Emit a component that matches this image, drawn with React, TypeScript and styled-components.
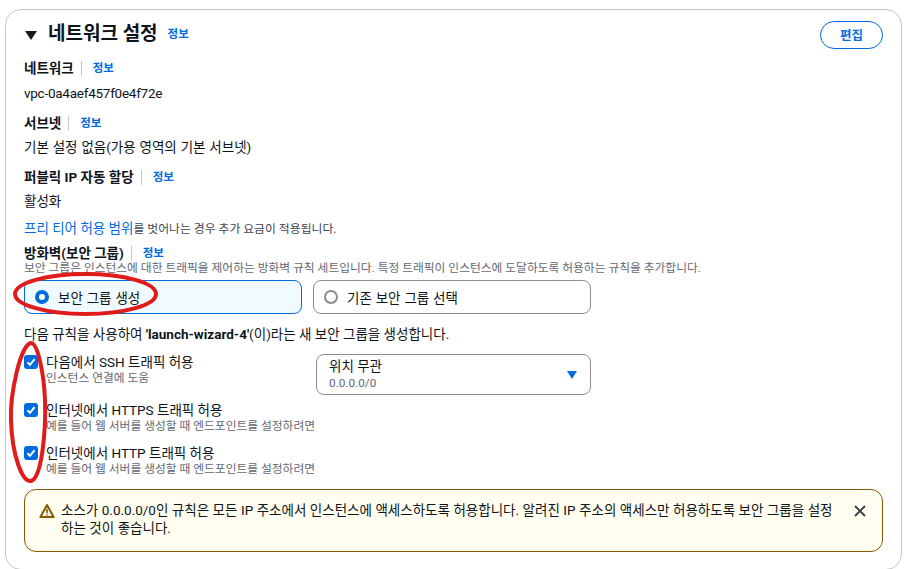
import React from 'react'
import styled, { createGlobalStyle } from 'styled-components'

const GlobalStyle = createGlobalStyle`
  html, body {
    margin: 0;
    padding: 0;
    background: #ffffff;
    overflow: hidden;
  }
  body {
    font-family: Roboto, "Noto Sans CJK KR", sans-serif;
    color: #16191f;
  }
`

const Page = styled.div`
  position: relative;
  width: 908px;
  height: 569px;
  padding: 9px 6px 0 5px;
  box-sizing: border-box;
  overflow: hidden;
`

const Card = styled.section`
  height: 561px;
  box-sizing: border-box;
  border: 1px solid #c6c6cd;
  border-radius: 16px;
  padding: 11px 18px 0;
`

const Header = styled.header`
  display: flex;
  align-items: center;
  justify-content: space-between;
  height: 26px;
  margin-bottom: 13px;
`

const HeaderLeft = styled.div`
  display: flex;
  align-items: center;
`

const Caret = styled.span`
  width: 0;
  height: 0;
  margin: 2px 11px 0 1px;
  border-left: 6px solid transparent;
  border-right: 6px solid transparent;
  border-top: 9px solid #16191f;
`

const Title = styled.h2`
  margin: 0 10px 0 0;
  font-size: 19px;
  line-height: 26px;
  font-weight: 700;
  color: #0f141a;
`

const InfoLink = styled.a`
  font-size: 11.5px;
  line-height: 16px;
  font-weight: 700;
  color: #006ce0;
`

const EditButton = styled.button`
  width: 63px;
  height: 28px;
  margin: 0 0 -1px;
  padding: 0;
  border: 1px solid #006ce0;
  border-radius: 14px;
  background: #ffffff;
  color: #006ce0;
  font-family: inherit;
  font-size: 12.5px;
  font-weight: 700;
`

const Label = styled.div`
  display: flex;
  align-items: center;
  height: 16px;
  font-size: 13.5px;
  line-height: 16px;
  font-weight: 700;
  color: #0f141a;
`

const LabelDivider = styled.span`
  width: 1px;
  height: 15px;
  margin: 0 11px 0 7px;
  background: #c6c6cd;
`

const Field = styled.div<{ $gap: number; $after: number }>`
  display: flex;
  flex-direction: column;
  gap: ${(p) => p.$gap}px;
  margin-bottom: ${(p) => p.$after}px;
`

const Value = styled.div<{ $tight?: boolean }>`
  font-size: 13.5px;
  line-height: 18px;
  word-spacing: 0.5px;
  letter-spacing: ${(p) => (p.$tight ? '-0.25px' : '0')};
  color: #0f141a;
`

const Note = styled.div`
  font-size: 11.85px;
  line-height: 16px;
  margin-bottom: 8px;
  color: #424650;
`

const NoteLink = styled.a`
  font-size: 13.5px;
  color: #006ce0;
`

const Description = styled.div`
  font-size: 11.75px;
  line-height: 14px;
  white-space: nowrap;
  color: #656871;
`

const TileRow = styled.div`
  display: flex;
  gap: 11px;
  margin-top: 5px;
  margin-bottom: 11px;
`

const Tile = styled.label<{ $active?: boolean }>`
  display: flex;
  align-items: center;
  gap: 9px;
  width: 278px;
  height: 34px;
  padding-left: 10px;
  box-sizing: border-box;
  border: 1px solid ${(p) => (p.$active ? '#006ce0' : '#8c8c94')};
  border-radius: 8px;
  background: ${(p) => (p.$active ? '#f0fbff' : '#ffffff')};
  font-size: 13.5px;
  word-spacing: 0.5px;
  color: #0f141a;
`

const RadioDot = styled.span<{ $active?: boolean }>`
  width: 14px;
  height: 14px;
  box-sizing: border-box;
  border-radius: 50%;
  border: ${(p) => (p.$active ? '4px solid #006ce0' : '2px solid #8c8c94')};
  background: #ffffff;
`

const RuleIntro = styled.div`
  font-size: 13.5px;
  line-height: 18px;
  margin-bottom: 11px;
  color: #0f141a;

  b {
    font-weight: 700;
  }
`

const RuleArea = styled.div`
  display: flex;
  height: 135px;
`

const RuleList = styled.div`
  display: flex;
  flex-direction: column;
  gap: 12px;
  width: 292px;
`

const RuleItem = styled.div`
  display: flex;
  gap: 2px;

  &:first-child {
    margin-bottom: 5px;
  }
`

const CheckBox = styled.span`
  display: flex;
  align-items: center;
  justify-content: center;
  flex: none;
  width: 14px;
  height: 14px;
  margin: 1px 6px 0 0;
  border-radius: 3px;
  background: #006ce0;
`

const RuleText = styled.div`
  display: flex;
  flex-direction: column;
  gap: 1px;
`

const RuleTitle = styled.div`
  font-size: 13.5px;
  line-height: 16px;
  color: #0f141a;
`

const Select = styled.div`
  position: relative;
  width: 275px;
  height: 41px;
  box-sizing: border-box;
  padding: 2px 0 0 12px;
  border: 1px solid #8c8c94;
  border-radius: 8px;
`

const SelectMain = styled.div`
  font-size: 13.5px;
  line-height: 18px;
  color: #0f141a;
`

const SelectSub = styled.div`
  margin-top: 1px;
  font-size: 11.8px;
  line-height: 14px;
  color: #656871;
`

const SelectCaret = styled.span`
  position: absolute;
  right: 13px;
  top: 16px;
  border-left: 5px solid transparent;
  border-right: 5px solid transparent;
  border-top: 8px solid #006ce0;
`

const Alert = styled.div`
  display: flex;
  width: 859px;
  height: 63px;
  box-sizing: border-box;
  padding: 11px 15px 0 14px;
  border: 1px solid #855900;
  border-radius: 12px;
  background: #fffef0;
`

const AlertIcon = styled.svg`
  flex: none;
  width: 16px;
  height: 16px;
  margin: 2px 6px 0 0;
`

const AlertText = styled.div`
  flex: 1;
  font-size: 13.5px;
  line-height: 18px;
  word-spacing: 0.15px;
  padding-right: 19px;
  color: #0f141a;
`

const CloseIcon = styled.svg`
  flex: none;
  width: 14px;
  height: 14px;
  margin-top: 3px;
`

const Annotation = styled.svg`
  position: absolute;
  left: 0;
  top: 0;
  pointer-events: none;
`

const Check = () => (
  <svg width="10" height="10" viewBox="0 0 10 10" fill="none">
    <path d="M1.5 5.2 4 7.8 8.6 2.2" stroke="#fff" strokeWidth="2" />
  </svg>
)

const Info = () => <InfoLink>정보</InfoLink>

const rules = [
  { title: '다음에서 SSH 트래픽 허용', sub: '인스턴스 연결에 도움' },
  {
    title: '인터넷에서 HTTPS 트래픽 허용',
    sub: '예를 들어 웹 서버를 생성할 때 엔드포인트를 설정하려면',
  },
  {
    title: '인터넷에서 HTTP 트래픽 허용',
    sub: '예를 들어 웹 서버를 생성할 때 엔드포인트를 설정하려면',
  },
]

const App: React.FC = () => {
  return (
    <Page>
      <GlobalStyle />
      <Card>
        <Header>
          <HeaderLeft>
            <Caret />
            <Title>네트워크 설정</Title>
            <Info />
          </HeaderLeft>
          <EditButton>편집</EditButton>
        </Header>

        <Field $gap={8} $after={13}>
          <Label>
            네트워크
            <LabelDivider />
            <Info />
          </Label>
          <Value $tight>vpc-0a4aef457f0e4f72e</Value>
        </Field>
        <Field $gap={7} $after={13}>
          <Label>
            서브넷
            <LabelDivider />
            <Info />
          </Label>
          <Value>기본 설정 없음(가용 영역의 기본 서브넷)</Value>
        </Field>
        <Field $gap={7} $after={10}>
          <Label>
            퍼블릭 IP 자동 할당
            <LabelDivider />
            <Info />
          </Label>
          <Value>활성화</Value>
        </Field>
        <Note>
          <NoteLink>프리 티어 허용 범위</NoteLink>를 벗어나는 경우 추가 요금이 적용됩니다.
        </Note>

        <Label>
          방화벽(보안 그룹)
          <LabelDivider />
          <Info />
        </Label>
        <Description>
          보안 그룹은 인스턴스에 대한 트래픽을 제어하는 방화벽 규칙 세트입니다. 특정 트래픽이 인스턴스에 도달하도록 허용하는 규칙을 추가합니다.
        </Description>
        <TileRow>
          <Tile $active>
            <RadioDot $active />
            보안 그룹 생성
          </Tile>
          <Tile>
            <RadioDot />
            기존 보안 그룹 선택
          </Tile>
        </TileRow>
        <RuleIntro>
          다음 규칙을 사용하여 <b>'launch-wizard-4'</b>(이)라는 새 보안 그룹을 생성합니다.
        </RuleIntro>

        <RuleArea>
          <RuleList>
            {rules.map((rule) => (
              <RuleItem key={rule.title}>
                <CheckBox>
                  <Check />
                </CheckBox>
                <RuleText>
                  <RuleTitle>{rule.title}</RuleTitle>
                  <Description>{rule.sub}</Description>
                </RuleText>
              </RuleItem>
            ))}
          </RuleList>
          <Select>
            <SelectMain>위치 무관</SelectMain>
            <SelectSub>0.0.0.0/0</SelectSub>
            <SelectCaret />
          </Select>
        </RuleArea>

        <Alert>
          <AlertIcon viewBox="0 0 16 16" fill="none">
            <path d="M8 2 14.6 14H1.4Z" stroke="#855900" strokeWidth="2" strokeLinejoin="round" />
            <path d="M8 6v4.2M8 11.2v1.4" stroke="#855900" strokeWidth="1.6" />
          </AlertIcon>
          <AlertText>
            소스가 0.0.0.0/0인 규칙은 모든 IP 주소에서 인스턴스에 액세스하도록 허용합니다. 알려진 IP 주소의 액세스만 허용하도록 보안 그룹을 설정하는 것이 좋습니다.
          </AlertText>
          <CloseIcon viewBox="0 0 14 14" fill="none">
            <path d="M2 2 12 12M12 2 2 12" stroke="#424650" strokeWidth="2" />
          </CloseIcon>
        </Alert>
      </Card>

      {/* hand-drawn red markers on top of the form */}
      <Annotation width="908" height="569" fill="none">
        <ellipse cx="85.5" cy="294" rx="70.5" ry="20" stroke="#e01b1b" strokeWidth="4" />
        <path
          d="M31 343C20 345 10 395 11 420C12 455 22 482 31 481C42 478 46 430 45 400C44 375 38 343 31 343Z"
          stroke="#e01b1b"
          strokeWidth="4"
        />
      </Annotation>
    </Page>
  )
}

export default App
